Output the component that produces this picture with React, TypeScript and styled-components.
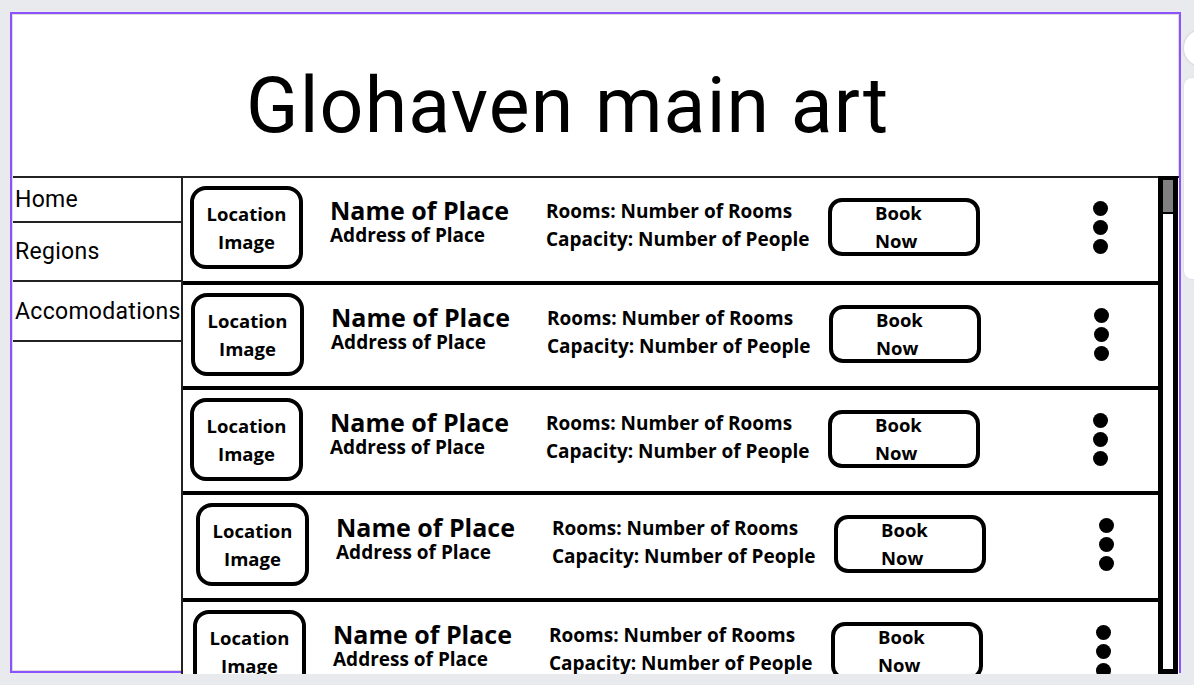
import React from "react";
import styled, { createGlobalStyle } from "styled-components";

const GlobalStyle = createGlobalStyle`
  html, body {
    margin: 0;
    padding: 0;
    background: #e9eaee;
    overflow: hidden;
  }
  * {
    box-sizing: border-box;
  }
`;

type Place = {
  shift: number;
  height: number;
};

// the wireframe rows are hand placed, so each one sits a little differently
const places: Place[] = [
  { shift: 0, height: 103 },
  { shift: 1, height: 101 },
  { shift: 0, height: 101 },
  { shift: 6, height: 103 },
  { shift: 3, height: 120 },
];

const navItems = [
  { label: "Home", height: 43 },
  { label: "Regions", height: 57 },
  { label: "Accomodations", height: 58 },
];

const App: React.FC = () => {
  return (
    <>
      <GlobalStyle />
      <Page>
        <Canvas>
          <Header>
            <Title>Glohaven main art</Title>
          </Header>
          <Body>
            <Sidebar>
              {navItems.map((item) => (
                <NavItem key={item.label} $height={item.height}>
                  {item.label}
                </NavItem>
              ))}
            </Sidebar>
            <ListArea>
              <Rows>
                {places.map((place, i) => (
                  <Row
                    key={i}
                    $shift={place.shift}
                    $height={place.height}
                    $last={i === places.length - 1}
                  >
                    <LocationBox>
                      <div>Location</div>
                      <div>Image</div>
                    </LocationBox>
                    <NameCol>
                      <PlaceName>Name of Place</PlaceName>
                      <PlaceAddress>Address of Place</PlaceAddress>
                    </NameCol>
                    <InfoCol>
                      <div>Rooms: Number of Rooms</div>
                      <div>Capacity: Number of People</div>
                    </InfoCol>
                    <BookButton>
                      <div>Book</div>
                      <div>Now</div>
                    </BookButton>
                    <Dots>
                      <Dot />
                      <Dot />
                      <Dot />
                    </Dots>
                  </Row>
                ))}
              </Rows>
              <Scrollbar>
                <Thumb />
              </Scrollbar>
            </ListArea>
          </Body>
        </Canvas>
        <SideRail>
          <RailCircle />
          <RailPanel />
        </SideRail>
      </Page>
    </>
  );
};

const Page = styled.div`
  display: flex;
  gap: 3px;
  width: 1194px;
  height: 685px;
  padding: 12px 0 0 10px;
  overflow: hidden;
`;

const Canvas = styled.div`
  display: flex;
  flex-direction: column;
  width: 1171px;
  height: 661px;
  flex-shrink: 0;
  background: #ffffff;
  border: 2px solid #8c52ff;
  box-shadow: inset 0 0 0 1px #dcdce0;
`;

const Header = styled.div`
  height: 164px;
  padding: 54px 0 0 233px;
  border-bottom: 2px solid #222;
  margin-left: 1px;
`;

const Title = styled.h1`
  margin: 0;
  font-family: Roboto, "Noto Sans", sans-serif;
  font-weight: 400;
  font-size: 77px;
  letter-spacing: 1.2px;
  line-height: 1;
  color: #000;
  white-space: nowrap;
`;

const Body = styled.div`
  display: flex;
  flex: 1;
  min-height: 0;
  margin-bottom: -3px;
  position: relative;
`;

const Sidebar = styled.nav`
  width: 171px;
  flex-shrink: 0;
  border-right: 2px solid #222;
  padding-left: 1px;
`;

const NavItem = styled.div<{ $height: number }>`
  display: flex;
  align-items: center;
  height: ${(p) => p.$height + 2}px;
  padding-left: 2px;
  border-bottom: 2px solid #222;
  font-family: Roboto, "Noto Sans", sans-serif;
  font-size: 23px;
  letter-spacing: 0.3px;
  color: #000;
  white-space: nowrap;
`;

const ListArea = styled.div`
  display: flex;
  flex: 1;
  min-width: 0;
  background: #fff;
`;

const Rows = styled.div`
  flex: 1;
  overflow: hidden;
`;

const Row = styled.div<{ $shift: number; $height: number; $last: boolean }>`
  display: flex;
  align-items: flex-start;
  height: ${(p) => p.$height + (p.$last ? 0 : 4)}px;
  padding-left: ${(p) => 7 + p.$shift}px;
  border-bottom: ${(p) => (p.$last ? "none" : "4px solid #000")};
  font-family: "Open Sans", Lato, sans-serif;
  font-weight: 700;
  color: #000;
  white-space: nowrap;
`;

const LocationBox = styled.div`
  display: flex;
  flex-direction: column;
  align-items: center;
  justify-content: center;
  width: 113px;
  height: 83px;
  margin-top: 8px;
  border: 4px solid #000;
  border-radius: 16px;
  font-size: 18.5px;
  line-height: 28px;
`;

const NameCol = styled.div`
  width: 216px;
  margin: 19px 0 0 27px;
`;

const PlaceName = styled.div`
  font-size: 25px;
  line-height: 26px;
`;

const PlaceAddress = styled.div`
  font-size: 19px;
  line-height: 24px;
`;

const InfoCol = styled.div`
  width: 282px;
  margin-top: 19px;
  font-size: 19px;
  line-height: 28px;
`;

const BookButton = styled.div`
  display: flex;
  flex-direction: column;
  justify-content: center;
  width: 152px;
  height: 58px;
  margin-top: 20px;
  padding-left: 43px;
  border: 4px solid #000;
  border-radius: 14px;
  font-size: 18.5px;
  line-height: 28px;
`;

const Dots = styled.div`
  display: flex;
  flex-direction: column;
  gap: 4px;
  margin: 23px 0 0 113px;
`;

const Dot = styled.span`
  display: block;
  width: 15px;
  height: 15px;
  border-radius: 50%;
  background: #000;
`;

const Scrollbar = styled.div`
  width: 20px;
  flex-shrink: 0;
  margin: -2px 1px 0 0;
  border: 5px solid #000;
  border-top-width: 4px;
  background: #fff;
`;

const Thumb = styled.div`
  height: 34px;
  background: #808080;
  border-bottom: 2px solid #000;
`;

const SideRail = styled.div`
  display: flex;
  flex-direction: column;
  gap: 12px;
  padding-top: 18px;
  flex: 1;
  min-width: 0;
`;

const RailCircle = styled.div`
  width: 36px;
  height: 36px;
  border-radius: 50%;
  background: #fff;
  box-shadow: 0 0 3px rgba(0, 0, 0, 0.18);
`;

const RailPanel = styled.div`
  width: 60px;
  height: 201px;
  border-radius: 8px;
  background: #fff;
  box-shadow: 0 0 2px rgba(0, 0, 0, 0.1);
`;

export default App;
